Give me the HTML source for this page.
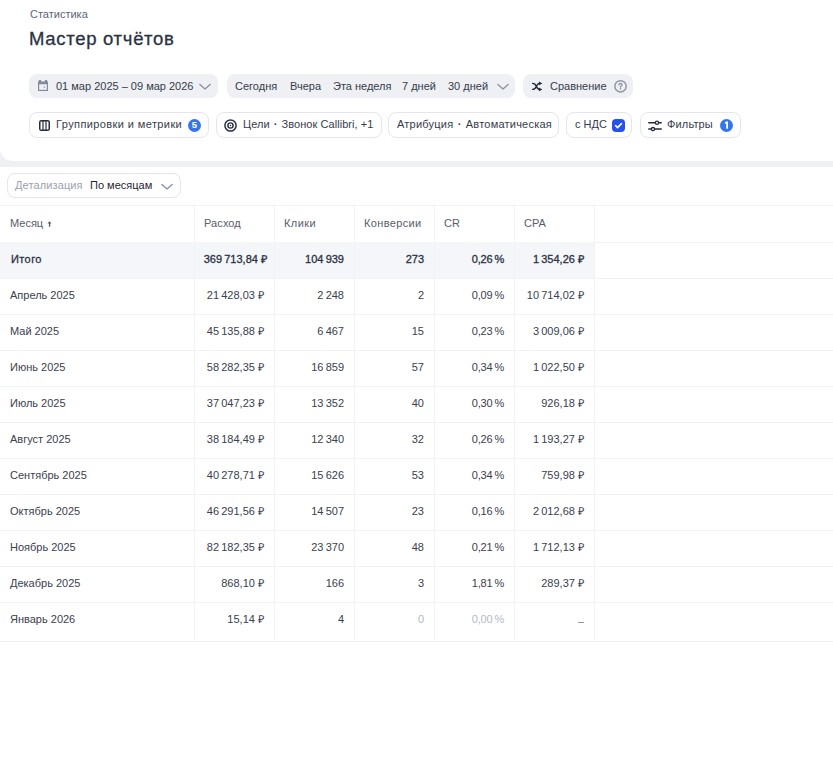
<!DOCTYPE html>
<html><head><meta charset="utf-8">
<style>
*{box-sizing:border-box;margin:0;padding:0}
html,body{width:833px;height:758px;overflow:hidden;background:#fff;font-family:"Liberation Sans",sans-serif;color:#1f2533}
div,span,svg{position:absolute;white-space:nowrap}
.bg{left:0;top:0;width:833px;height:168px;background:#eef0f4}
.top{left:0;top:0;width:833px;height:161px;background:#fff;border-radius:0 0 0 13px}
.card2{left:0;top:167px;width:833px;height:591px;background:#fff}
.crumb{left:30px;top:6px;font-size:11px;line-height:16px;color:#5e6575}
.title{left:29px;top:27px;font-size:18.5px;line-height:24px;color:#2a3142;-webkit-text-stroke:0.3px #2a3142;letter-spacing:0.7px}
.chip{height:24px;border-radius:8px;background:#eef0f4;font-size:11px;line-height:24px;color:#353c4b}
.ochip{height:26px;border-radius:8px;background:#fff;border:1px solid #e4e6eb;font-size:11px;line-height:22px;color:#353c4b}
.badge{width:13px;height:13px;border-radius:50%;background:#3575ee;color:#fff;font-size:9.5px;line-height:11.5px;text-align:center;font-weight:bold}
.hl{height:1px;background:#f1f2f4}
.vl{width:1px;background:#f1f2f4}
.cell{font-size:11px;line-height:16px;color:#3a404e}
.hd{color:#575d6c}
.r{text-align:right}
.b{-webkit-text-stroke:0.3px #2a3142;color:#2a3142}
.muted{color:#b4b9c4}
</style></head><body>
<div class="bg"></div>
<div class="top"></div>
<div class="card2"></div>
<div class="crumb">Статистика</div>
<div class="title">Мастер отчётов</div>

<div class="chip" style="left:29px;top:74px;width:189px">
<svg style="left:9px;top:6px" width="10" height="11" viewBox="0 0 10 11"><rect x="0.9" y="0" width="2.2" height="2" fill="#858b9c"/><rect x="6.9" y="0" width="2.2" height="2" fill="#858b9c"/><rect x="0" y="1.4" width="10" height="2.8" fill="#858b9c"/><rect x="0.6" y="3.5" width="8.8" height="6.9" fill="none" stroke="#858b9c" stroke-width="1.2"/><path d="M6.3 6.2 L7.2 7.1 L6.3 8 L5.4 7.1 Z" fill="#858b9c"/></svg>
<span style="left:27px">01 мар 2025 – 09 мар 2026</span>
<svg style="left:170px;top:8px" width="12" height="8" viewBox="0 0 12 8"><path d="M0.9 2.4 L6 6.9 L11.1 2.4" fill="none" stroke="#8a91a0" stroke-width="1.35" stroke-linecap="round" stroke-linejoin="round"/></svg>
</div>
<div class="chip" style="left:227px;top:74px;width:288px">
<span style="left:8px">Сегодня</span>
<span style="left:63px">Вчера</span>
<span style="left:106px">Эта неделя</span>
<span style="left:175px">7 дней</span>
<span style="left:221px">30 дней</span>
<svg style="left:270px;top:8px" width="12" height="8" viewBox="0 0 12 8"><path d="M0.9 2.4 L6 6.9 L11.1 2.4" fill="none" stroke="#8a91a0" stroke-width="1.35" stroke-linecap="round" stroke-linejoin="round"/></svg>
</div>
<div class="chip" style="left:523px;top:74px;width:110px">
<svg style="left:9px;top:6px" width="11" height="12" viewBox="0 0 11 12"><path d="M0.6 3.4 C3 3.4 3.6 4.6 4.4 6.4 C5.2 8.2 5.8 9.4 7.6 9.4 M0.6 9.4 C3 9.4 3.6 8.2 4.4 6.4 C5.2 4.6 5.8 3.4 7.6 3.4" fill="none" stroke="#262c3a" stroke-width="1.4" stroke-linecap="round"/><path d="M6.9 1.6 L10.4 3.4 L6.9 5.2 Z M6.9 7.6 L10.4 9.4 L6.9 11.2 Z" fill="#262c3a"/></svg>
<span style="left:27px">Сравнение</span>
<svg style="left:90px;top:5px" width="15" height="15" viewBox="0 0 15 15"><circle cx="7.5" cy="7.3" r="5.65" fill="none" stroke="#9096a4" stroke-width="1.5"/><path d="M5.9 5.9 C5.9 4.9 6.6 4.5 7.5 4.5 C8.4 4.5 9.1 5 9.1 5.8 C9.1 6.8 7.5 6.9 7.5 8.3" fill="none" stroke="#9096a4" stroke-width="1.3" stroke-linecap="round"/><circle cx="7.5" cy="9.9" r="0.8" fill="#9096a4"/></svg>
</div>

<div class="ochip" style="left:29px;top:112px;width:180px">
<svg style="left:9px;top:7px" width="11" height="11" viewBox="0 0 11 11"><rect x="0.75" y="0.75" width="9.5" height="9.5" rx="1.6" fill="none" stroke="#262c3a" stroke-width="1.5"/><line x1="4" y1="1" x2="4" y2="10" stroke="#262c3a" stroke-width="1.2"/><line x1="7" y1="1" x2="7" y2="10" stroke="#262c3a" stroke-width="1.2"/></svg>
<span style="left:26px;letter-spacing:0.4px">Группировки и метрики</span>
<span class="badge" style="left:158px;top:6px">5</span>
</div>
<div class="ochip" style="left:216px;top:112px;width:166px">
<svg style="left:7px;top:6px" width="13" height="13" viewBox="0 0 13 13"><circle cx="6.5" cy="6.5" r="5.6" fill="none" stroke="#2a3142" stroke-width="1.5"/><circle cx="6.5" cy="6.5" r="2.6" fill="none" stroke="#262c3a" stroke-width="1.4"/><circle cx="6.5" cy="6.5" r="0.75" fill="#262c3a"/></svg>
<span style="left:26px;letter-spacing:0.05px">Цели <i style="font-style:normal;font-weight:bold;padding:0 1px">·</i> Звонок Callibri, +1</span>
</div>
<div class="ochip" style="left:388px;top:112px;width:171px">
<span style="left:8px;letter-spacing:0.22px">Атрибуция <i style="font-style:normal;font-weight:bold;padding:0 1px">·</i> Автоматическая</span>
</div>
<div class="ochip" style="left:566px;top:112px;width:66px">
<span style="left:8px">с НДС</span>
<span style="left:45px;top:6px;width:13px;height:13px;border-radius:4px;background:#2352ee"></span>
<svg style="left:45px;top:6px" width="13" height="13" viewBox="0 0 13 13"><path d="M3.6 6.7 L5.6 8.6 L9.4 4.6" fill="none" stroke="#fff" stroke-width="1.6" stroke-linecap="round" stroke-linejoin="round"/></svg>
</div>
<div class="ochip" style="left:640px;top:112px;width:101px">
<svg style="left:7px;top:7px" width="15" height="13" viewBox="0 0 15 13"><path d="M0.8 2.7 H13.2 M0.8 9.1 H13.2" stroke="#262c3a" stroke-width="1.5" stroke-linecap="round"/><circle cx="9" cy="2.7" r="1.6" fill="#fff" stroke="#262c3a" stroke-width="1.3"/><circle cx="5" cy="9.1" r="1.6" fill="#fff" stroke="#262c3a" stroke-width="1.3"/></svg>
<span style="left:26px;letter-spacing:0.15px">Фильтры</span>
<span class="badge" style="left:79px;top:6px"></span><svg style="left:79px;top:6px" width="13" height="13" viewBox="0 0 13 13"><path d="M5.1 4.2 L7.1 3.1 V9.7" fill="none" stroke="#fff" stroke-width="1.8" stroke-linejoin="round"/></svg>
</div>

<div class="ochip" style="left:7px;top:173px;width:174px;height:25px;line-height:23px">
<span style="left:7px;color:#9ba1ad;letter-spacing:0.12px">Детализация</span>
<span style="left:82px;color:#1f2533">По месяцам</span>
<svg style="left:153px;top:8px" width="12" height="8" viewBox="0 0 12 8"><path d="M0.9 2.4 L6 6.9 L11.1 2.4" fill="none" stroke="#8a91a0" stroke-width="1.35" stroke-linecap="round" stroke-linejoin="round"/></svg>
</div>

<div class="hl" style="left:0;top:205px;width:833px"></div>
<div class="hl" style="left:0;top:242px;width:833px"></div>
<div style="left:0;top:242px;width:594px;height:36px;background:#f5f6f9"></div>
<div class="hl" style="left:0;top:278px;width:833px"></div>
<div class="hl" style="left:0;top:314px;width:833px"></div>
<div class="hl" style="left:0;top:350px;width:833px"></div>
<div class="hl" style="left:0;top:386px;width:833px"></div>
<div class="hl" style="left:0;top:422px;width:833px"></div>
<div class="hl" style="left:0;top:458px;width:833px"></div>
<div class="hl" style="left:0;top:494px;width:833px"></div>
<div class="hl" style="left:0;top:530px;width:833px"></div>
<div class="hl" style="left:0;top:566px;width:833px"></div>
<div class="hl" style="left:0;top:602px;width:833px"></div>
<div class="hl" style="left:0;top:641px;width:833px"></div>
<div class="vl" style="left:194px;top:206px;height:434px"></div>
<div class="vl" style="left:274px;top:206px;height:434px"></div>
<div class="vl" style="left:354px;top:206px;height:434px"></div>
<div class="vl" style="left:434px;top:206px;height:434px"></div>
<div class="vl" style="left:514px;top:206px;height:434px"></div>
<div class="vl" style="left:594px;top:206px;height:434px"></div>
<span class="cell hd" style="left:10px;top:215px;letter-spacing:0px">Месяц</span>
<span class="cell hd" style="left:204px;top:215px;letter-spacing:0.1px">Расход</span>
<span class="cell hd" style="left:284px;top:215px;letter-spacing:0.45px">Клики</span>
<span class="cell hd" style="left:364px;top:215px;letter-spacing:0.35px">Конверсии</span>
<span class="cell hd" style="left:444px;top:215px;letter-spacing:0px">CR</span>
<span class="cell hd" style="left:524px;top:215px;letter-spacing:0px">CPA</span>
<svg style="left:47px;top:221px" width="5" height="6" viewBox="0 0 5 6"><path d="M2.5 0.3 L4.6 2.6 H0.4 Z" fill="#575d6c"/><rect x="1.9" y="2" width="1.3" height="3.8" fill="#575d6c"/></svg>
<span class="cell b" style="left:11px;top:251px;letter-spacing:0.4px">Итого</span>
<span class="cell r b" style="right:566px;top:251px">369 713,84  ₽</span>
<span class="cell r b" style="right:489px;top:251px">104 939</span>
<span class="cell r b" style="right:409px;top:251px">273</span>
<span class="cell r b" style="right:329px;top:251px;letter-spacing:-0.2px">0,26 %</span>
<span class="cell r b" style="right:249px;top:251px">1 354,26  ₽</span>
<span class="cell" style="left:10px;top:287px">Апрель 2025</span>
<span class="cell r" style="right:569px;top:287px">21 428,03  ₽</span>
<span class="cell r" style="right:489px;top:287px">2 248</span>
<span class="cell r" style="right:409px;top:287px">2</span>
<span class="cell r" style="right:329px;top:287px;letter-spacing:-0.2px">0,09 %</span>
<span class="cell r" style="right:249px;top:287px">10 714,02  ₽</span>
<span class="cell" style="left:10px;top:323px">Май 2025</span>
<span class="cell r" style="right:569px;top:323px">45 135,88  ₽</span>
<span class="cell r" style="right:489px;top:323px">6 467</span>
<span class="cell r" style="right:409px;top:323px">15</span>
<span class="cell r" style="right:329px;top:323px;letter-spacing:-0.2px">0,23 %</span>
<span class="cell r" style="right:249px;top:323px">3 009,06  ₽</span>
<span class="cell" style="left:10px;top:359px">Июнь 2025</span>
<span class="cell r" style="right:569px;top:359px">58 282,35  ₽</span>
<span class="cell r" style="right:489px;top:359px">16 859</span>
<span class="cell r" style="right:409px;top:359px">57</span>
<span class="cell r" style="right:329px;top:359px;letter-spacing:-0.2px">0,34 %</span>
<span class="cell r" style="right:249px;top:359px">1 022,50  ₽</span>
<span class="cell" style="left:10px;top:395px">Июль 2025</span>
<span class="cell r" style="right:569px;top:395px">37 047,23  ₽</span>
<span class="cell r" style="right:489px;top:395px">13 352</span>
<span class="cell r" style="right:409px;top:395px">40</span>
<span class="cell r" style="right:329px;top:395px;letter-spacing:-0.2px">0,30 %</span>
<span class="cell r" style="right:249px;top:395px">926,18  ₽</span>
<span class="cell" style="left:10px;top:431px">Август 2025</span>
<span class="cell r" style="right:569px;top:431px">38 184,49  ₽</span>
<span class="cell r" style="right:489px;top:431px">12 340</span>
<span class="cell r" style="right:409px;top:431px">32</span>
<span class="cell r" style="right:329px;top:431px;letter-spacing:-0.2px">0,26 %</span>
<span class="cell r" style="right:249px;top:431px">1 193,27  ₽</span>
<span class="cell" style="left:10px;top:467px">Сентябрь 2025</span>
<span class="cell r" style="right:569px;top:467px">40 278,71  ₽</span>
<span class="cell r" style="right:489px;top:467px">15 626</span>
<span class="cell r" style="right:409px;top:467px">53</span>
<span class="cell r" style="right:329px;top:467px;letter-spacing:-0.2px">0,34 %</span>
<span class="cell r" style="right:249px;top:467px">759,98  ₽</span>
<span class="cell" style="left:10px;top:503px">Октябрь 2025</span>
<span class="cell r" style="right:569px;top:503px">46 291,56  ₽</span>
<span class="cell r" style="right:489px;top:503px">14 507</span>
<span class="cell r" style="right:409px;top:503px">23</span>
<span class="cell r" style="right:329px;top:503px;letter-spacing:-0.2px">0,16 %</span>
<span class="cell r" style="right:249px;top:503px">2 012,68  ₽</span>
<span class="cell" style="left:10px;top:539px">Ноябрь 2025</span>
<span class="cell r" style="right:569px;top:539px">82 182,35  ₽</span>
<span class="cell r" style="right:489px;top:539px">23 370</span>
<span class="cell r" style="right:409px;top:539px">48</span>
<span class="cell r" style="right:329px;top:539px;letter-spacing:-0.2px">0,21 %</span>
<span class="cell r" style="right:249px;top:539px">1 712,13  ₽</span>
<span class="cell" style="left:10px;top:575px">Декабрь 2025</span>
<span class="cell r" style="right:569px;top:575px">868,10  ₽</span>
<span class="cell r" style="right:489px;top:575px">166</span>
<span class="cell r" style="right:409px;top:575px">3</span>
<span class="cell r" style="right:329px;top:575px;letter-spacing:-0.2px">1,81 %</span>
<span class="cell r" style="right:249px;top:575px">289,37  ₽</span>
<span class="cell" style="left:10px;top:611px">Январь 2026</span>
<span class="cell r" style="right:569px;top:611px">15,14  ₽</span>
<span class="cell r" style="right:489px;top:611px">4</span>
<span class="cell r muted" style="right:409px;top:611px">0</span>
<span class="cell r muted" style="right:329px;top:611px;letter-spacing:-0.2px">0,00 %</span>
<span class="cell r muted" style="right:249px;top:611px"></span>
<div style="left:578px;top:622px;width:6px;height:1px;background:#8f95a1"></div>
</body></html>
